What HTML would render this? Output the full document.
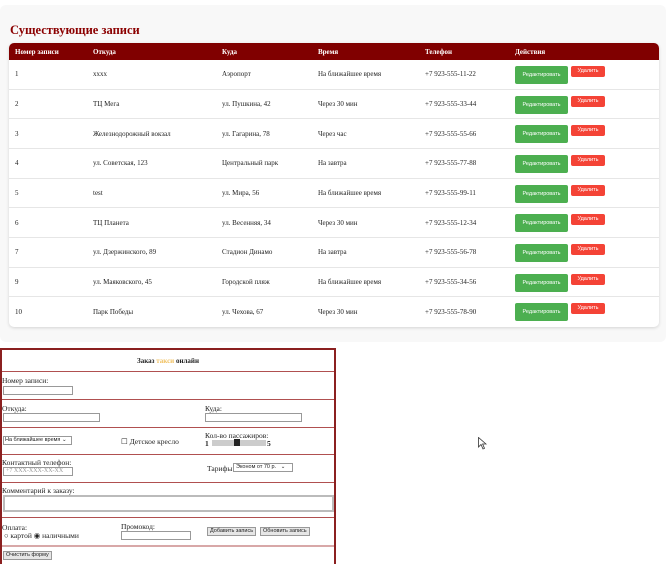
<!DOCTYPE html>
<html style="width:666px;height:564px;overflow:hidden"><head><meta charset="utf-8"><style>
*{box-sizing:border-box;margin:0;padding:0}
body{width:666px;height:564px;background:#fff;font-family:"Liberation Serif","DejaVu Serif",serif;position:relative;overflow:hidden;color:#222}
.panel{position:absolute;left:0;top:5px;width:666px;height:337px;background:#f8f8f8;border-radius:6px}
h2{position:absolute;left:10px;top:23px;font-size:12.5px;color:#8b0000;font-weight:bold}
.card{position:absolute;left:9px;top:43px;width:650px;height:284px;background:#fff;border-radius:5px;box-shadow:0 1px 3px rgba(0,0,0,.15);overflow:hidden}
.hdr{height:17px;background:#800000;color:#fff;font-size:7px;font-weight:bold;position:relative}
.row{height:29.67px;border-bottom:1px solid #e6e6e6;position:relative;font-size:7px}
.c{position:absolute;top:50%;transform:translateY(-50%);white-space:nowrap}
.hdr .c{top:9px}
.g{position:absolute;left:506px;top:6px;width:53px;height:18px;background:#4caf50;color:#fff;font-family:"Liberation Sans",sans-serif;font-size:5.5px;border-radius:2px;text-align:center;line-height:18px}
.r{position:absolute;left:562px;top:6px;width:34px;height:11px;background:#f44336;color:#fff;font-family:"Liberation Sans",sans-serif;font-size:5.5px;border-radius:2px;text-align:center;line-height:10px}
.form{position:absolute;left:0;top:348px;width:336px;height:222px;border:2px solid #8b2020;font-size:7.5px}
.fr{position:absolute;left:0;width:332px;border-bottom:1px solid #b05050}
.a{position:absolute;white-space:nowrap}
.in{position:absolute;border:1px solid #999;height:9px;background:#fff}
.btn{position:absolute;border:1px solid #999;background:#e6e6e6;font-family:"Liberation Sans",sans-serif;font-size:5.5px;height:9px;line-height:7px;padding:0 2px;white-space:nowrap}
</style></head><body>
<div class="panel"></div>
<h2>Существующие записи</h2>
<div class="card">
<div class="hdr"><span class="c" style="left:6px">Номер записи</span><span class="c" style="left:84px">Откуда</span><span class="c" style="left:213px">Куда</span><span class="c" style="left:309px">Время</span><span class="c" style="left:416px">Телефон</span><span class="c" style="left:506px">Действия</span></div>
<div class="row"><span class="c" style="left:6px">1</span><span class="c" style="left:84px">xxxx</span><span class="c" style="left:213px">Аэропорт</span><span class="c" style="left:309px">На ближайшее время</span><span class="c" style="left:416px">+7 923-555-11-22</span><div class="g">Редактировать</div><div class="r">Удалить</div></div>
<div class="row"><span class="c" style="left:6px">2</span><span class="c" style="left:84px">ТЦ Мега</span><span class="c" style="left:213px">ул. Пушкина, 42</span><span class="c" style="left:309px">Через 30 мин</span><span class="c" style="left:416px">+7 923-555-33-44</span><div class="g">Редактировать</div><div class="r">Удалить</div></div>
<div class="row"><span class="c" style="left:6px">3</span><span class="c" style="left:84px">Железнодорожный вокзал</span><span class="c" style="left:213px">ул. Гагарина, 78</span><span class="c" style="left:309px">Через час</span><span class="c" style="left:416px">+7 923-555-55-66</span><div class="g">Редактировать</div><div class="r">Удалить</div></div>
<div class="row"><span class="c" style="left:6px">4</span><span class="c" style="left:84px">ул. Советская, 123</span><span class="c" style="left:213px">Центральный парк</span><span class="c" style="left:309px">На завтра</span><span class="c" style="left:416px">+7 923-555-77-88</span><div class="g">Редактировать</div><div class="r">Удалить</div></div>
<div class="row"><span class="c" style="left:6px">5</span><span class="c" style="left:84px">test</span><span class="c" style="left:213px">ул. Мира, 56</span><span class="c" style="left:309px">На ближайшее время</span><span class="c" style="left:416px">+7 923-555-99-11</span><div class="g">Редактировать</div><div class="r">Удалить</div></div>
<div class="row"><span class="c" style="left:6px">6</span><span class="c" style="left:84px">ТЦ Планета</span><span class="c" style="left:213px">ул. Весенняя, 34</span><span class="c" style="left:309px">Через 30 мин</span><span class="c" style="left:416px">+7 923-555-12-34</span><div class="g">Редактировать</div><div class="r">Удалить</div></div>
<div class="row"><span class="c" style="left:6px">7</span><span class="c" style="left:84px">ул. Дзержинского, 89</span><span class="c" style="left:213px">Стадион Динамо</span><span class="c" style="left:309px">На завтра</span><span class="c" style="left:416px">+7 923-555-56-78</span><div class="g">Редактировать</div><div class="r">Удалить</div></div>
<div class="row"><span class="c" style="left:6px">9</span><span class="c" style="left:84px">ул. Маяковского, 45</span><span class="c" style="left:213px">Городской пляж</span><span class="c" style="left:309px">На ближайшее время</span><span class="c" style="left:416px">+7 923-555-34-56</span><div class="g">Редактировать</div><div class="r">Удалить</div></div>
<div class="row" style="border:0"><span class="c" style="left:6px">10</span><span class="c" style="left:84px">Парк Победы</span><span class="c" style="left:213px">ул. Чехова, 67</span><span class="c" style="left:309px">Через 30 мин</span><span class="c" style="left:416px">+7 923-555-78-90</span><div class="g">Редактировать</div><div class="r">Удалить</div></div>
</div>

<div class="form">
<div class="fr" style="top:0;height:22px"><div class="a" style="left:0;width:332px;text-align:center;top:7px;font-weight:bold;font-size:7px">Заказ <span style="color:#f0c060">такси</span> онлайн</div></div>
<div class="fr" style="top:22px;height:28px"><div class="a" style="left:0;top:4px">Номер записи:</div><div class="in" style="left:1px;top:14px;width:70px"></div></div>
<div class="fr" style="top:50px;height:28px"><div class="a" style="left:0;top:4px">Откуда:</div><div class="in" style="left:1px;top:13px;width:97px"></div><div class="a" style="left:203px;top:4px">Куда:</div><div class="in" style="left:203px;top:13px;width:97px"></div></div>
<div class="fr" style="top:78px;height:27px"><div class="in" style="left:1px;top:8px;width:69px;font-family:'Liberation Sans',sans-serif;font-size:5.5px;line-height:7px;padding-left:1px">На ближайшее время ⌄</div><div class="a" style="left:119px;top:9px">☐ Детское кресло</div><div class="a" style="left:203px;top:3px">Кол-во пассажиров:</div><div class="a" style="left:203px;top:11px;font-weight:bold">1</div><div style="position:absolute;left:210px;top:12px;width:54px;height:6px;background:#ccc"></div><div style="position:absolute;left:232px;top:11px;width:6px;height:7px;background:#222"></div><div class="a" style="left:265px;top:11px;font-weight:bold">5</div></div>
<div class="fr" style="top:105px;height:28px"><div class="a" style="left:0;top:3px">Контактный телефон:</div><div class="in" style="left:1px;top:12px;width:70px;font-size:6px;color:#999;line-height:7px;padding-left:2px">+7 XXX-XXX-XX-XX</div><div class="a" style="left:205px;top:9px">Тарифы:</div><div class="in" style="left:231px;top:8px;width:60px;font-family:'Liberation Sans',sans-serif;font-size:5.5px;line-height:7px;padding-left:2px">Эконом от 70 р. &nbsp; ⌄</div></div>
<div class="fr" style="top:133px;height:35px"><div class="a" style="left:0;top:3px">Комментарий к заказу:</div><div class="in" style="left:1px;top:12px;width:331px;height:17px;border-width:2px;border-color:#bbb"></div></div>
<div class="fr" style="top:168px;height:29px;border-bottom:2px solid #d8a8a8"><div class="a" style="left:0;top:5px">Оплата:</div><div class="a" style="left:2px;top:13px">○ картой ◉ наличными</div><div class="a" style="left:119px;top:4px">Промокод:</div><div class="in" style="left:119px;top:13px;width:70px"></div><div class="btn" style="left:205px;top:9px">Добавить запись</div><div class="btn" style="left:258px;top:9px">Обновить запись</div></div>
<div class="btn" style="left:1px;top:201px">Очистить форму</div>
</div>
<svg style="position:absolute;left:478px;top:437px" width="9" height="13" viewBox="0 0 9 13"><path d="M0.5 0.5 L0.5 10 L3 7.5 L5 12 L6.5 11.3 L4.6 7 L8 7 Z" fill="#fff" stroke="#333" stroke-width="0.8"/></svg>
</body></html>
